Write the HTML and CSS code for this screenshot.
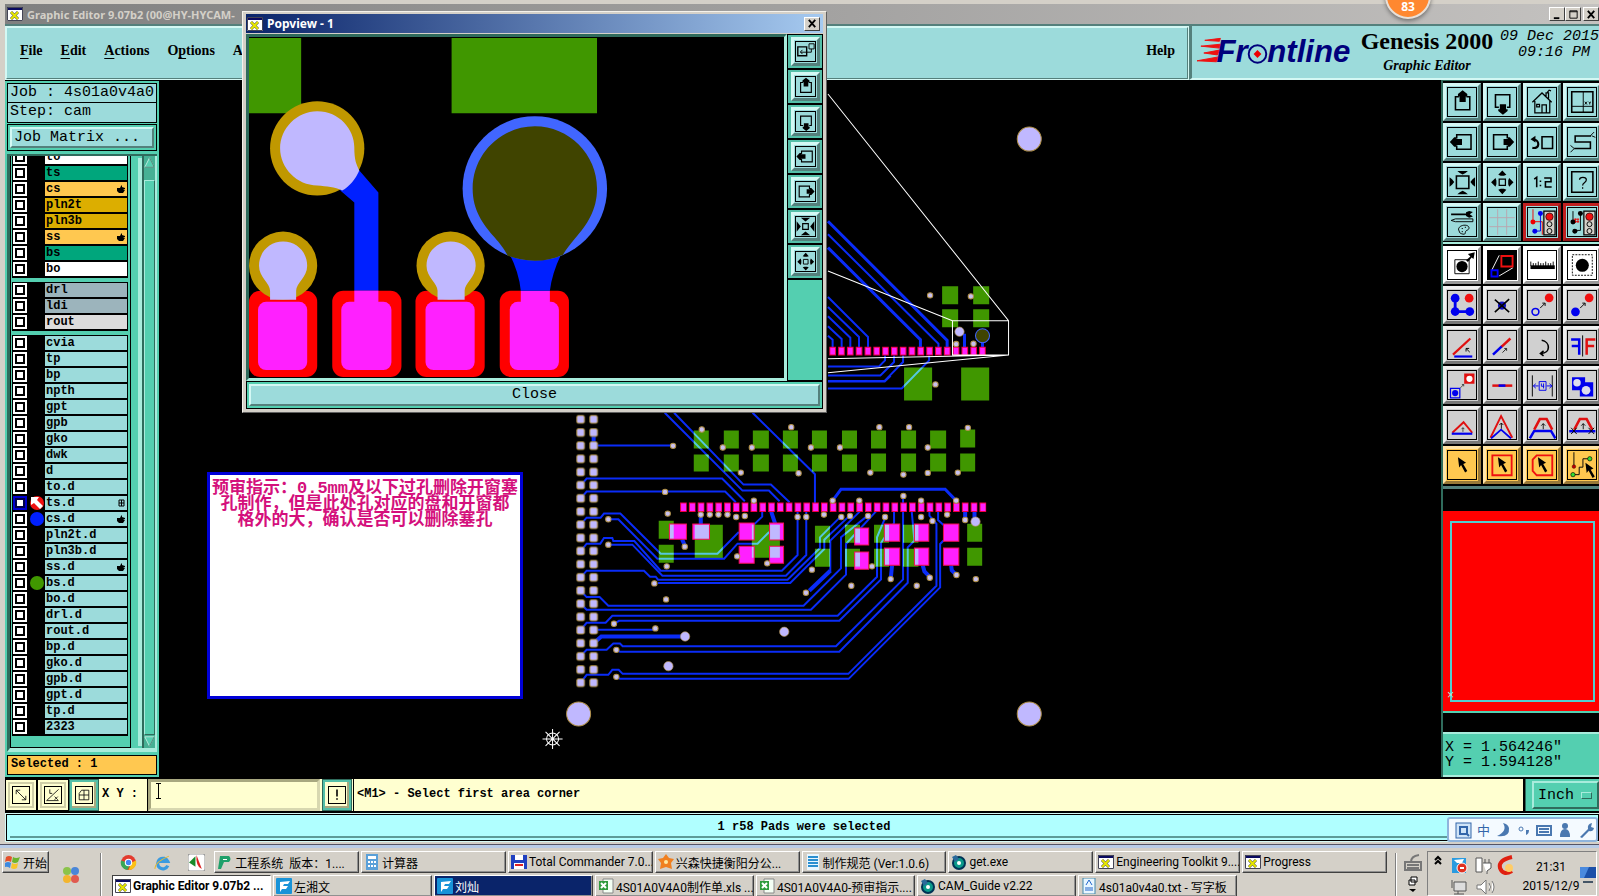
FILE: index.html
```html
<!DOCTYPE html>
<html lang="zh">
<head>
<meta charset="utf-8">
<title>Graphic Editor 9.07b2</title>
<link rel="stylesheet" href="styles.css">
</head>
<body>
<svg class="defs" aria-hidden="true">
  <symbol id="xwin" viewBox="0 0 16 14"><rect width="16" height="14" fill="#fff"/><path d="M0 0h16v3H0z" fill="#0a0a60"/><path d="M.5.5h15v13H.5z" fill="none" stroke="#445"/><path d="M4 5l7 7M11 5l-7 7" stroke="#555" stroke-width="3"/><path d="M4 5l7 7M11 5l-7 7" stroke="#e6e600" stroke-width="2"/></symbol>
  <symbol id="up" viewBox="0 0 90 90"><path d="M35 28H24v42h46V28H59" fill="none" stroke="#000" stroke-width="5"/><path d="M47 7l15 12v8h-5v18H37V27h-5v-8z"/></symbol>
  <symbol id="down" viewBox="0 0 90 90"><path d="M35 62H24V22h46v40H61" fill="none" stroke="#000" stroke-width="5"/><path d="M48 86l15-12v-6h-5V52H38v16h-5v6z"/></symbol>
  <symbol id="left" viewBox="0 0 90 90"><path d="M28 34V22h46v46H28V56" fill="none" stroke="#000" stroke-width="5"/><path d="M6 45l14-15h7v5h18v20H27v5h-7z"/></symbol>
  <symbol id="right" viewBox="0 0 90 90"><path d="M62 34V22H18v46h44V56" fill="none" stroke="#000" stroke-width="5"/><path d="M84 45L70 30h-6v5H50v20h14v5h6z"/></symbol>
  <symbol id="zin" viewBox="0 0 90 90"><path d="M27 26h40v40H27z" fill="none" stroke="#000" stroke-width="5"/><path d="M30 10h34l-8 6-9 5-9-5zM30 84h34l-8-6-9-5-9 5zM5 30v30l8-6 7-9-7-9zM87 30v30l-8-6-7-9 7-9z"/></symbol>
  <symbol id="zins" viewBox="0 0 90 90"><path d="M33 33h24v24H33z" fill="none" stroke="#000" stroke-width="5"/><path d="M25 7h40L45 24zM25 83h40L45 66zM7 22v46l18-23zM83 22v46L65 45z"/></symbol>
  <symbol id="zout" viewBox="0 0 90 90"><path d="M36 36h20v20H36z" fill="none" stroke="#000" stroke-width="4"/><path d="M33 22l13-14 13 14-8 3H41zM33 70l13 14 13-14-8-3H41zM24 32L10 46l14 14 3-8V40zM68 32l14 14-14 14-3-8V40z"/></symbol>
  <symbol id="hand" viewBox="0 0 8 8"><path d="M0 3h3l1-2 1-1v2l3 1v1H6l2 1-2 3H2L0 6z"/></symbol>
  <symbol id="cur" viewBox="0 0 90 90"><path d="M32 20l26 18-9 4 13 22-7 5-13-24-6 8z"/></symbol>
  <symbol id="sarrow" viewBox="0 0 24 24"><path d="M3 21L18 6M10 5h9v9" fill="none" stroke="#000" stroke-width="3"/></symbol>
  <symbol id="uarrow" viewBox="0 0 24 24"><path d="M12 24V4M5 11l7-7 7 7" fill="none" stroke="#000" stroke-width="3"/></symbol>
  <symbol id="excel" viewBox="0 0 16 16"><path d="M5 1h10v14H5z" fill="#f4fff4" stroke="#888"/><path d="M1 3h9v9H1z" fill="#2e9a3c"/><path d="M3 5l5 5M8 5l-5 5" stroke="#fff" stroke-width="2"/></symbol>
  <symbol id="fei" viewBox="0 0 16 16"><rect width="16" height="16" rx="1" fill="#1893d8"/><path d="M4 4l10-1-2 3H8l-1 2h5l-2 3H6l-2 3 0-6z" fill="#fff"/></symbol>
  <symbol id="gear" viewBox="0 0 16 16"><circle cx="8" cy="9" r="6" fill="#0a9a8a" stroke="#035" stroke-width="2"/><circle cx="8" cy="9" r="2" fill="#fff"/><path d="M1 3l4-2 3 4-4 3z" fill="#2a6a9a"/></symbol>
</svg>

<div class="app">
  <header class="titlebar"><svg class="ico"><use href="#xwin"/></svg><span class="title">Graphic Editor 9.07b2 (00@HY-HYCAM-</span>
    <span class="winbtns"><button aria-label="Minimize"><svg viewBox="0 0 12 12"><path d="M2 9h6v2H2z"/></svg></button><button aria-label="Maximize"><svg viewBox="0 0 12 12"><path d="M2 2h8v8H2zM2 3h8" fill="none" stroke="#000"/></svg></button><button class="x" aria-label="Close window"><svg viewBox="0 0 12 12"><path d="M2 2l7 8M9 2l-7 8" stroke="#000" stroke-width="2"/></svg></button></span>
  </header>

  <div class="top">
    <nav class="menubar"><button><u>F</u>ile</button><button><u>E</u>dit</button><button><u>A</u>ctions</button><button>O<u>p</u>tions</button><button>Analysis</button><button class="help">Help</button></nav>
    <div class="brand">
      <svg class="logo" viewBox="0 0 164 40" role="img" aria-label="Frontline"><path d="M8 7l16-2-1 3zM4 13l20-2-1 4zM7 20l16-3-2 5zM0 28l22-4-2 5z" fill="#e11" stroke="#e11"/><text x="20" y="29">Fr</text><text x="72" y="29">ntline</text><circle cx="62" cy="21" r="9" fill="none" stroke="#00007c" stroke-width="2"/><path d="M62 17l4 4-4 4-4-4z" fill="#e00"/></svg>
      <div class="names"><div class="gen">Genesis 2000</div><div class="ge">Graphic Editor</div></div>
      <div class="date">09 Dec 2015<br>09:16 PM&nbsp;</div>
    </div>
  </div>

  <main class="main">
    <aside class="side">
      <div class="jobbox">Job : 4s01a0v4a0</div>
      <div class="jobbox step">Step: cam</div>
      <div class="matrix"><button>Job Matrix ...</button></div>
      <div class="listwrap">
        <div class="list">
          <div class="grp first">
            <label class="w"><input type="checkbox"><i></i><span>to</span></label>
            <label class="g"><input type="checkbox"><i></i><span>ts</span></label>
            <label class="o"><input type="checkbox"><i></i><span>cs<svg><use href="#hand"/></svg></span></label>
            <label class="y"><input type="checkbox"><i></i><span>pln2t</span></label>
            <label class="y"><input type="checkbox"><i></i><span>pln3b</span></label>
            <label class="o"><input type="checkbox"><i></i><span>ss<svg><use href="#hand"/></svg></span></label>
            <label class="g"><input type="checkbox"><i></i><span>bs</span></label>
            <label class="w"><input type="checkbox"><i></i><span>bo</span></label>
          </div>
          <div class="grp">
            <label class="s"><input type="checkbox"><i></i><span>drl</span></label>
            <label class="s"><input type="checkbox"><i></i><span>ldi</span></label>
            <label class="r"><input type="checkbox"><i></i><span>rout</span></label>
          </div>
          <div class="grp">
            <label><input type="checkbox"><i></i><span>cvia</span></label>
            <label><input type="checkbox"><i></i><span>tp</span></label>
            <label><input type="checkbox"><i></i><span>bp</span></label>
            <label><input type="checkbox"><i></i><span>npth</span></label>
            <label><input type="checkbox"><i></i><span>gpt</span></label>
            <label><input type="checkbox"><i></i><span>gpb</span></label>
            <label><input type="checkbox"><i></i><span>gko</span></label>
            <label><input type="checkbox"><i></i><span>dwk</span></label>
            <label><input type="checkbox"><i></i><span>d</span></label>
            <label><input type="checkbox"><i></i><span>to.d</span></label>
            <label><input type="checkbox" checked><i class="dot red"><svg viewBox="0 0 14 14"><path d="M1 1h8L7 4l6 6-3 3-6-6-3 2z" fill="#fff"/></svg></i><span>ts.d<svg viewBox="0 0 8 8"><path d="M2 1h5v6H2zM2 4h5M4.500 1v6" fill="none" stroke="#000"/></svg></span></label>
            <label><input type="checkbox"><i class="dot blue"></i><span>cs.d<svg><use href="#hand"/></svg></span></label>
            <label><input type="checkbox"><i></i><span>pln2t.d</span></label>
            <label><input type="checkbox"><i></i><span>pln3b.d</span></label>
            <label><input type="checkbox"><i></i><span>ss.d<svg><use href="#hand"/></svg></span></label>
            <label><input type="checkbox"><i class="dot green"></i><span>bs.d</span></label>
            <label><input type="checkbox"><i></i><span>bo.d</span></label>
            <label><input type="checkbox"><i></i><span>drl.d</span></label>
            <label><input type="checkbox"><i></i><span>rout.d</span></label>
            <label><input type="checkbox"><i></i><span>bp.d</span></label>
            <label><input type="checkbox"><i></i><span>gko.d</span></label>
            <label><input type="checkbox"><i></i><span>gpb.d</span></label>
            <label><input type="checkbox"><i></i><span>gpt.d</span></label>
            <label><input type="checkbox"><i></i><span>tp.d</span></label>
            <label><input type="checkbox"><i></i><span>2323</span></label>
          </div>
        </div>
        <div class="scroll"><svg viewBox="0 0 14 14"><path d="M1 13L7 1l6 12z" fill="#54cfb0" stroke="#d4f5ea"/><path d="M7 1l6 12H1" fill="none" stroke="#2f6b5c"/></svg><div class="thumb"></div><svg viewBox="0 0 14 14"><path d="M1 1h12L7 13z" fill="#54cfb0" stroke="#d4f5ea"/><path d="M13 1L7 13" stroke="#2f6b5c"/></svg></div>
      </div>
      <div class="selected">Selected : 1</div>
    </aside>

    <section class="canvas">
      <svg class="pcb" viewBox="159 80 1281 696" preserveAspectRatio="xMinYMin slice">
        <defs>
          <pattern id="conn" x="40.500" y="97.300" width="39" height="39.450" patternUnits="userSpaceOnUse"><rect x="8" y="8" width="23" height="23" rx="5" fill="#c0b8ff" stroke="#a88a38" stroke-width="3"/></pattern>
          <marker id="via" markerUnits="userSpaceOnUse" markerWidth="24" markerHeight="24" viewBox="-12 -12 24 24"><circle r="8" fill="#c8c0f0" stroke="#b09048" stroke-width="3"/></marker>
          <marker id="big" markerUnits="userSpaceOnUse" markerWidth="36" markerHeight="36" viewBox="-18 -18 36 36"><circle r="14" fill="#c0b8ff" stroke="#b09048" stroke-width="2"/></marker>
          <path id="greens" d="M399 150h45v54h-45zM489 150h45v54h-45zM576 150h48v54h-48zM666 150h45v54h-45zM753 150h45v54h-45zM843 150h45v54h-45zM930 150h45v54h-45zM1020 150h45v54h-45zM1107 150h48v54h-48zM1197 147h45v54h-45zM399 222h45v51h-45zM489 222h45v51h-45zM576 222h48v51h-48zM666 222h45v51h-45zM753 222h45v51h-45zM843 222h45v51h-45zM930 219h45v54h-45zM1020 219h45v54h-45zM1107 219h48v54h-48zM1197 219h45v54h-45zM294 420h45v54h-45zM294 492h45v54h-45zM402 432h84v99h-84zM573 432h84v99h-84zM762 435h45v51h-45zM762 504h45v54h-45zM852 432h45v54h-45zM852 504h45v54h-45zM939 432h45v54h-45zM939 504h45v54h-45zM1026 432h46v54h-46zM1026 504h46v54h-46zM1218 429h45v54h-45zM1218 501h45v54h-45zM1143-282h48v54h-48zM1236-282h48v54h-48zM1143-213h48v54h-48zM1236-213h48v54h-48zM1029-39h84v99h-84zM1200-39h84v99h-84z"/>
          <clipPath id="gc"><use href="#greens"/></clipPath>
          <path id="pads" d="M326 430h51v46h-51zM396 430h50v46h-50zM535 427h45v51h-45zM626 427h42v51h-42zM535 497h45v51h-45zM626 497h42v51h-42zM881 442h42v51h-42zM881 514h42v52h-42zM970 430h46v52h-46zM970 502h46v52h-46zM1060 430h43v52h-43zM1060 502h43v52h-43zM1147 430h46v52h-46zM1147 502h46v52h-46z"/>
          <g id="traces" fill="none" stroke="currentColor" stroke-width="6">
            <path d="M60 432l18-21h42l10-12h49l121 120h170l64-65M143 416h30l117 118h200l40-45h60l35-35M60 512l18-23h41l11-17h25l3 9h63l79 89h363l47-47V393M143 492h72l90 93h370l61-62V393M60 591l18-21h172l18 18h17l7 9h388l97-95v-32l65-65M292 607h396l102-102v-28l76-72M60 630l18 19h39l26 26h585l112-112v-93l80-65M60 669l18 18h672l105-105v-92l92-100M808 575V480l88-87M60 747l18-21h57l20-21h675l118-117V470l25-60M160 729l15-9h660l125-124V487l39-60v-34M60 826l18-19h60l20-19h20l8 8h639l201-200V345M167 807l11 6h657l205-207V500l20-20-8-87M60 906l18-24h65l12-15h19l12 12h676l264-264V430l-21-25v-12M167 888l11 6h685l274-274V490l12-12M1131 393v25l16 15M99 747h185M99 195h238M60 315l18-21h406l68 68M60 354l18-21h415l32 32M312 97l233 233h79l32 32M340 97l208 215h82l56 53M575 97l187 184v89M604 393v15l-25 24M801 3h170l18-17"/>
            <path d="M801-250l120 120v30M801-220l93 90v30M801-192l67 64v28M801-162l41 38v24M801-134l14 12v22M801-42h153l18-18v-15M801-15h157l41-40v-20M801 2h169l56-57v-20M801 24h221l82-84v-15M801-438l331 328v15"/>
            <path d="M815 360l25-34h312l33 34M801-477l357 357v20M801-398l277 276v22M1210-140v40M1264-125v30" stroke-width="9"/>
            <path d="M99 155v40M99 787l23-20h251M420 393v45M745 630l63-60M364 476l9 20M631 393l12 37M993 554l-4 40M1085 554l5 18 14 14M1170 554l2 15 12 12M1240 390v30M1212 390v25" stroke-width="12"/>
          </g>
        </defs>
        <rect x="159" y="80" width="1281" height="696"/>
        <g transform="translate(560 380) scale(.33333)">
          <use href="#traces" color="#0a2cf8"/>
          <use href="#greens" fill="#409700"/>
          <g clip-path="url(#gc)"><use href="#traces" color="#55c8de"/></g>
          <use href="#pads" fill="#ff20ff"/>
          <g clip-path="url(#gc)"><use href="#pads" fill="#c0b8ff"/></g>
          <use href="#pads" fill="none" stroke="#f01050" stroke-width="3"/>
          <path d="M358 380h918" stroke="#f00040" stroke-width="28" stroke-dasharray="20 6.380"/>
          <path d="M361 380h918" stroke="#ff20ff" stroke-width="23" stroke-dasharray="15 11.380"/>
          <path d="M805-88h470" stroke="#f00040" stroke-width="26" stroke-dasharray="20 6.400"/>
          <path d="M808-88h470" stroke="#ff20ff" stroke-width="20" stroke-dasharray="14 12.400"/>
          <rect x="40.500" y="97.300" width="78" height="828.400" fill="url(#conn)"/>
          <polyline fill="none" marker-start="url(#via)" marker-mid="url(#via)" marker-end="url(#via)" points="423,147 691,140 955,140 1044,140 1220,142 486,201 573,201 750,201 837,201 1100,201 540,276 713,278 928,276 1027,282 1100,277 1190,276 337,196 313,334 321,399 143,416 143,492 579,360 815,360 895,360 1027,346 1080,360 1185,360 420,402 447,402 473,402 500,402 526,409 552,406 710,409 736,409 789,402 841,409 867,406 921,406 972,409 1080,409 1114,421 1158,402 1212,418 372,498 529,527 619,548 318,557 753,567 281,608 735,636 871,615 933,557 989,595 1067,615 1106,591 1186,583 1244,595 316,656 160,729 284,743 167,807 167,888 1107,-255 1229,-252 1185,-109 1237,-110 1123,12"/>
          <polyline fill="none" marker-start="url(#big)" marker-mid="url(#big)" marker-end="url(#big)" points="373,767 670,753 323,856 1195,-146 1243,423"/>
          <circle cx="1264" cy="-134" r="21" fill="#404400" stroke="#4166ff" stroke-width="3"/>
          <path d="M801-858l541 679v103h-168v-103h168M801-328l373 149M801-65l541-11-541 53" fill="none" stroke="#fff" stroke-width="3"/>
        </g>
        <g fill="#c0b8ff" stroke="#b09048"><circle cx="1028" cy="139" r="12"/><circle cx="578" cy="713" r="12"/><circle cx="1028" cy="713" r="12"/></g>
        <g stroke="#fff" fill="none"><circle cx="552" cy="738" r="6"/><path d="M542 738h20M552 728v20M545 731l14 14M559 731l-14 14"/></g>
      </svg>
      <div class="note">预审指示：0.5mm及以下过孔删除开窗塞<br>孔制作，但是此处孔对应的盘和开窗都<br>格外的大，确认是否可以删除塞孔</div>
    </section>

    <aside class="tools">
      <div class="grid">
        <button aria-label="Pan up"><svg><use href="#up"/></svg></button>
        <button aria-label="Pan down"><svg><use href="#down"/></svg></button>
        <button aria-label="Home"><svg viewBox="0 0 90 90"><path d="M14 46l31-30 31 30M22 42v38h48V42M45 80V54h14v26M28 53h9v8h-9zM58 28V16h8v18M62 14l6-7 6 2" fill="none" stroke="#000" stroke-width="4"/></svg></button>
        <button aria-label="Window XY"><svg viewBox="0 0 90 90"><path d="M12 12h68v66H12z" fill="none" stroke="#000" stroke-width="5"/><path d="M49 12v66M12 59h68M54 44l7 9M61 44l-7 9M66 44l4 4 4-4M70 48v5" fill="none" stroke="#000" stroke-width="3"/></svg></button>
        <button aria-label="Pan left"><svg><use href="#left"/></svg></button>
        <button aria-label="Pan right"><svg><use href="#right"/></svg></button>
        <button aria-label="Previous view"><svg viewBox="0 0 90 90"><path d="M45 28h34v38H45z" fill="none" stroke="#000" stroke-width="5"/><path d="M14 64c26 4 22-24 8-26" fill="none" stroke="#000" stroke-width="7"/><path d="M8 36l16-11v22z"/></svg></button>
        <button aria-label="Serpentine"><svg viewBox="0 0 90 90"><path d="M74 26H23v19h49v21H20" fill="none" stroke="#000" stroke-width="5"/><path d="M72 25l12-12M76 25l12 5M20 66L8 56M20 66L8 78" fill="none" stroke="#000" stroke-width="3"/></svg></button>
        <button aria-label="Zoom in"><svg><use href="#zin"/></svg></button>
        <button aria-label="Zoom out"><svg><use href="#zout"/></svg></button>
        <button aria-label="Scale 1:2"><svg viewBox="0 0 90 90"><path d="M20 36l8-6v32M40 40v5M40 54v5M52 32h22v12H56v17h20" fill="none" stroke="#000" stroke-width="5"/></svg></button>
        <button aria-label="Help"><svg viewBox="0 0 90 90"><path d="M12 12h68v66H12z" fill="none" stroke="#000" stroke-width="5"/><path d="M37 38c0-10 22-10 22 0s-12 9-12 18M47 62v5" fill="none" stroke="#000" stroke-width="4"/></svg></button>
        <button aria-label="Setup"><svg viewBox="0 0 90 90"><path d="M10 18h50v5H10zM58 14l10-4 12 3-10 7 10 7-12 4-10-5z"/><path d="M10 40l14-5h56v9H24zM36 74c-8-10 8-22 24-18 12 4 8 14 0 16-8 4 0 14-12 12-8-2-12-4-12-10zM44 66h4M54 62h4M44 76h4" fill="none" stroke="#000" stroke-width="3"/></svg></button>
        <button aria-label="Grid"><svg viewBox="0 0 90 90"><path d="M31 4v82M60 4v82M4 31h82M4 60h82" stroke="#b9a6ae" stroke-width="3"/></svg></button>
        <button class="rb" aria-label="Net compare"><svg viewBox="0 0 90 90"><path d="M16 4v40h30v42" fill="none" stroke="#e00" stroke-width="3"/><path d="M40 18v56H20" fill="none" stroke="#00e" stroke-width="3"/><circle cx="16" cy="45" r="8" fill="#e00"/><circle cx="40" cy="18" r="8" fill="#00e"/><circle cx="22" cy="75" r="8" fill="#00e"/><path d="M51 10h36v76H51z" fill="#d4d0c8" stroke="#000" stroke-width="4"/><circle cx="69" cy="28" r="12" fill="#f01010" stroke="#000" stroke-width="2"/><g fill="none" stroke="#000" stroke-width="3"><circle cx="69" cy="52" r="8"/><circle cx="69" cy="74" r="8"/></g></svg></button>
        <button class="rb" aria-label="Net check"><svg viewBox="0 0 90 90"><path d="M16 10v36M40 18v54H22" fill="none" stroke="#000" stroke-width="3"/><path d="M18 36h18M18 44h18M24 34v14M32 34v14" stroke="#e00" stroke-width="3"/><circle cx="16" cy="45" r="8"/><circle cx="40" cy="18" r="8"/><circle cx="22" cy="75" r="8"/><path d="M51 10h36v76H51z" fill="#d4d0c8" stroke="#000" stroke-width="4"/><circle cx="69" cy="28" r="12" fill="#f01010" stroke="#000" stroke-width="2"/><g fill="none" stroke="#000" stroke-width="3"><circle cx="69" cy="52" r="8"/><circle cx="69" cy="74" r="8"/></g></svg></button>
      </div>
      <div class="grid gray">
        <button class="wh" aria-label="Move pad"><svg viewBox="0 0 90 90"><path d="M22 28h46v45H22z" fill="none" stroke="#000" stroke-width="3"/><circle cx="45" cy="50" r="18"/><path d="M58 30l14-12-8-8 22-6-4 22-6-5-12 14z"/></svg></button>
        <button class="wh" aria-label="Popview"><svg viewBox="0 0 90 90"><path d="M0 0h90v90H0z"/><path d="M36 14L12 62M80 54L36 80" stroke="#fff" stroke-width="3"/><path d="M43 16h36v34H43z" fill="none" stroke="#f01010" stroke-width="6"/><path d="M11 62h20v20H11z" fill="none" stroke="#00f" stroke-width="6"/></svg></button>
        <button class="wh" aria-label="Measure"><svg viewBox="0 0 90 90"><path d="M8 46h78v12H8z"/><path d="M9 48V34m8 14v-9m8 9v-9m8 9V34m8 14v-9m8 9v-9m8 9V34m8 14v-9m8 9v-9m8 9V34" stroke="#000" stroke-width="3"/></svg></button>
        <button class="wh" aria-label="Select area"><svg viewBox="0 0 90 90"><path d="M14 12h64v66H14z" fill="none" stroke="#000" stroke-width="3" stroke-dasharray="6 4"/><circle cx="46" cy="46" r="21"/></svg></button>
        <button aria-label="Copy nets"><svg viewBox="0 0 90 90"><path d="M23 23v43h50" fill="none" stroke="#00e" stroke-width="9"/><g fill="#00e"><circle cx="23" cy="23" r="14"/><circle cx="23" cy="66" r="14"/><circle cx="70" cy="66" r="14"/></g><circle cx="68" cy="23" r="14" fill="#f01010"/></svg></button>
        <button aria-label="Delete"><svg viewBox="0 0 90 90"><circle cx="45" cy="47" r="13" fill="#1010c0"/><path d="M22 28l46 40M68 26L22 68" stroke="#000" stroke-width="5"/></svg></button>
        <button aria-label="Move"><svg viewBox="0 0 90 90"><circle cx="68" cy="22" r="14" fill="#f01010"/><circle cx="24" cy="67" r="11" fill="none" stroke="#00e" stroke-width="5"/><use href="#sarrow" x="36" y="34" width="24" height="24"/></svg></button>
        <button aria-label="Copy"><svg viewBox="0 0 90 90"><circle cx="68" cy="22" r="14" fill="#f01010"/><circle cx="24" cy="67" r="14" fill="#00e"/><use href="#sarrow" x="36" y="34" width="24" height="24"/></svg></button>
        <button aria-label="Rotate line"><svg viewBox="0 0 90 90"><path d="M16 76l56-52" stroke="#e01010" stroke-width="7"/><path d="M20 82h58" stroke="#00e" stroke-width="7"/><path d="M70 68L58 56M58 66V56h10" fill="none" stroke="#000" stroke-width="3"/></svg></button>
        <button aria-label="Extend line"><svg viewBox="0 0 90 90"><path d="M16 76l30-28" stroke="#00e" stroke-width="8"/><path d="M44 50l28-26" stroke="#e01010" stroke-width="8"/><use href="#sarrow" x="44" y="52" width="20" height="20"/></svg></button>
        <button aria-label="Rotate"><svg viewBox="0 0 90 90"><path d="M44 30c28 4 30 42-2 42M50 64l-10 8 10 8" fill="none" stroke="#000" stroke-width="5"/></svg></button>
        <button aria-label="Mirror"><svg viewBox="0 0 90 90"><path d="M47 14v68" stroke="#000" stroke-width="3"/><path d="M10 27h26v49M12 48h24" fill="none" stroke="#00e" stroke-width="8"/><path d="M88 27H60v49M60 48h24" fill="none" stroke="#e01010" stroke-width="8"/></svg></button>
        <button aria-label="Resize"><svg viewBox="0 0 90 90"><path d="M8 56h30v30H8z" fill="none" stroke="#00e" stroke-width="4"/><circle cx="23" cy="71" r="10" fill="#00e"/><path d="M52 8h33v33H52z" fill="#e01010"/><circle cx="69" cy="25" r="10" fill="#fff"/><use href="#sarrow" x="38" y="40" width="16" height="16"/></svg></button>
        <button aria-label="Stretch"><svg viewBox="0 0 90 90"><path d="M14 47h64" stroke="#e01010" stroke-width="8"/><path d="M34 47h22" stroke="#00e" stroke-width="8"/></svg></button>
        <button aria-label="Spacing"><svg viewBox="0 0 90 90"><path d="M14 14v68M78 14v68" stroke="#000" stroke-width="3"/><path d="M36 34h22v28H36zM18 48h16M60 48h16M25 41l-8 7 8 7M69 41l8 7-8 7M43 40v9h9M50 40v16" fill="none" stroke="#00e" stroke-width="3"/></svg></button>
        <button aria-label="Merge"><svg viewBox="0 0 90 90"><path d="M13 20h42v16h26v46H38V62H13z" fill="#00e"/><circle cx="29" cy="38" r="12" fill="#dde"/><circle cx="58" cy="62" r="14" fill="#dde"/></svg></button>
        <button aria-label="Triangle"><svg viewBox="0 0 90 90"><path d="M14 70l36-34 28 34" fill="none" stroke="#e01010" stroke-width="6"/><path d="M12 73h66" stroke="#00e" stroke-width="7"/><use href="#uarrow" x="40" y="50" width="16" height="18"/></svg></button>
        <button aria-label="Peak"><svg viewBox="0 0 90 90"><path d="M8 86l34-70 36 70" fill="none" stroke="#e01010" stroke-width="6"/><path d="M10 88l32-28 32 28" fill="none" stroke="#00e" stroke-width="6"/><use href="#uarrow" x="32" y="34" width="22" height="24"/></svg></button>
        <button aria-label="Trapezoid"><svg viewBox="0 0 90 90"><path d="M6 88l14-24h54l14 24" fill="none" stroke="#00e" stroke-width="8"/><path d="M20 60l18-34h22l18 34" fill="none" stroke="#e01010" stroke-width="8"/><use href="#uarrow" x="38" y="36" width="22" height="24"/></svg></button>
        <button aria-label="Trapezoid cut"><svg viewBox="0 0 90 90"><path d="M4 65h84" stroke="#00e" stroke-width="8"/><path d="M20 60l18-34h22l18 34" fill="none" stroke="#e01010" stroke-width="8"/><path d="M10 54l18 20M28 54L10 74M66 54l18 20M84 54L66 74" stroke="#000" stroke-width="3"/><use href="#uarrow" x="38" y="36" width="22" height="24"/></svg></button>
        <button class="am" aria-label="Select"><svg><use href="#cur"/></svg></button>
        <button class="am" aria-label="Select in rectangle"><svg viewBox="0 0 90 90"><path d="M14 14h62v64H14z" fill="none" stroke="#f01010" stroke-width="6"/><use href="#cur" width="90" height="90"/></svg></button>
        <button class="am" aria-label="Select in polygon"><svg viewBox="0 0 90 90"><path d="M28 14h50v64H28L15 64V28z" fill="none" stroke="#f01010" stroke-width="6"/><use href="#cur" width="90" height="90"/></svg></button>
        <button class="am" aria-label="Select net"><svg viewBox="0 0 90 90"><path d="M19 4v46M16 76h20V52h12V25h20" fill="none" stroke="#000" stroke-width="3"/><circle cx="19" cy="50" r="6" fill="#b00" stroke="#000"/><g fill="#3d3" stroke="#000" stroke-width="2"><circle cx="16" cy="76" r="7"/><circle cx="70" cy="25" r="7"/></g><use href="#cur" x="24" y="18" width="90" height="90"/></svg></button>
      </div>
      <div class="gap"></div>
      <div class="overview"><div class="frame"><span>×</span></div></div>
      <div class="gap2"></div>
      <div class="coords">X = 1.564246"<br>Y = 1.594128"</div>
    </aside>
  </main>

  <div class="cmd">
    <button class="cb" aria-label="Snap"><svg viewBox="0 0 20 20"><path d="M4 4l12 12M4 9V4h5M16 11v5h-5" fill="none" stroke="#000"/></svg></button>
    <button class="cb" aria-label="Angle"><svg viewBox="0 0 20 20"><path d="M2 17L17 3M2 17h15M6 3v5h3M12 12l4 4M16 12l-4 4" fill="none" stroke="#000"/></svg></button>
    <button class="cb on" aria-label="Grid snap"><svg viewBox="0 0 20 20"><path d="M7 4h9v12H4V8zM4 10h12M10 4v12" fill="none" stroke="#000"/></svg></button>
    <label for="xy">X Y :</label>
    <span class="field"><input id="xy" type="text"><svg viewBox="0 0 7 16"><path d="M1 .5h5M1 15.500h5M3.500 1v14" stroke="#000"/></svg></span>
    <button class="cb on" aria-label="Run"><svg viewBox="0 0 20 20"><path d="M9 3h2v9H9zM9 14h2v2H9z"/></svg></button>
    <output class="msg">&lt;M1&gt; - Select first area corner</output>
    <div class="unit"><button>Inch<i></i></button></div>
  </div>
  <div class="status"><div>1 r58 Pads were selected</div></div>
</div>

<footer class="taskbar">
  <button class="tb start"><svg viewBox="0 0 16 16"><path d="M1 3q3-2 6 0L6 8Q3 6 0 8z" fill="#e5502a"/><path d="M8 3q3 2 7 0l-2 5q-3 2-6 0z" fill="#6ab52c"/><path d="M0 9q3-2 6 0l-1 5q-3-2-5-1z" fill="#3d8ae0"/><path d="M7 9q3 2 6 0l-1 5q-3 2-6 0z" fill="#f7c52c"/></svg>开始</button>
  <svg class="clover" viewBox="0 0 18 18"><circle cx="5" cy="5" r="4" fill="#8bc34a"/><circle cx="13" cy="5" r="4" fill="#4a86d8"/><circle cx="5" cy="13" r="4" fill="#f3b52e"/><circle cx="13" cy="13" r="4" fill="#e05a50"/></svg>
  <i class="sep"></i>
  <div class="rows">
    <div class="row">
      <span class="quick">
        <svg viewBox="0 0 16 16"><circle cx="8" cy="8" r="7" fill="#e33b2e"/><path d="M1 6a7 7 0 0 0 6 9l3-6z" fill="#3aa757"/><path d="M15 6a7 7 0 0 1-7 9l3-7z" fill="#fbc116"/><circle cx="8" cy="8" r="3" fill="#4285f4" stroke="#fff"/></svg>
        <svg viewBox="0 0 16 16"><path d="M13 11a5 5 0 1 1 0-4H5" fill="none" stroke="#3a9be0" stroke-width="3"/><path d="M1 14Q0 8 14 2" fill="none" stroke="#e8b830" stroke-width="1"/></svg>
        <svg viewBox="0 0 16 16"><rect width="16" height="16" rx="2" fill="#fff" stroke="#999"/><path d="M8 1l5 13q-6-2-5-13z" fill="#d22"/><path d="M7 2v10L1 8z" fill="#1a8a2a"/></svg>
      </span>
      <button class="tb"><svg viewBox="0 0 16 16"><path d="M3 2h9q3 3 0 6H7L4 15H1z" fill="#1fa06a"/><path d="M6 5h4v1H6z" fill="#fff"/></svg><span>工程系统&ensp;版本：1....</span></button>
      <button class="tb"><svg viewBox="0 0 16 16"><path d="M2 0h12v16H2z" fill="#5aa0d8"/><path d="M4 2h8v3H4zM4 7h2v2H4zM7 7h2v2H7zM10 7h2v2h-2zM4 11h2v2H4zM7 11h2v2H7zM10 11h2v2h-2z" fill="#fff"/></svg><span>计算器</span></button>
      <button class="tb"><svg viewBox="0 0 16 16"><path d="M0 1h16v14H0z" fill="#2040c0"/><path d="M4 1h8v5H4zM3 9h10v6H3z" fill="#fff"/><path d="M4 11h8" stroke="#d22" stroke-width="2"/></svg><span>Total Commander 7.0...</span></button>
      <button class="tb"><svg viewBox="0 0 16 16"><path d="M8 0l3 4 5 1-3 4 1 6-6-2-6 2 1-6-3-4 5-1z" fill="#f08020"/><circle cx="8" cy="8" r="2" fill="#ffe9a0"/></svg><span>兴森快捷衡阳分公...</span></button>
      <button class="tb"><svg viewBox="0 0 16 16"><path d="M2 0h12v16H2z" fill="#e8f6ff"/><path d="M3 3h10M3 6h10M3 9h10M3 12h10" stroke="#2a8fd0" stroke-width="2"/></svg><span>制作规范 (Ver:1.0.6)</span></button>
      <button class="tb"><svg><use href="#gear"/></svg><span>get.exe</span></button>
      <button class="tb"><svg><use href="#xwin"/></svg><span>Engineering Toolkit 9....</span></button>
      <button class="tb"><svg><use href="#xwin"/></svg><span>Progress</span></button>
    </div>
    <div class="row two">
      <button class="tb active"><svg><use href="#xwin"/></svg><span>Graphic Editor 9.07b2 ...</span></button>
      <button class="tb"><svg><use href="#fei"/></svg><span>左湘文</span></button>
      <button class="tb flash"><svg><use href="#fei"/></svg><span>刘灿</span></button>
      <button class="tb"><svg><use href="#excel"/></svg><span>4S01A0V4A0制作单.xls ...</span></button>
      <button class="tb"><svg><use href="#excel"/></svg><span>4S01A0V4A0-预审指示....</span></button>
      <button class="tb"><svg><use href="#gear"/></svg><span>CAM_Guide v2.22</span></button>
      <button class="tb"><svg viewBox="0 0 16 16"><path d="M2 0h12v16H2z" fill="#e8f6ff" stroke="#48a"/><path d="M5 7l3-5 3 5M4 10h8M4 12h8" fill="none" stroke="#26c"/></svg><span>4s01a0v4a0.txt - 写字板</span></button>
    </div>
  </div>
  <i class="sep late"></i>
  <svg class="lang" viewBox="0 0 20 40"><path d="M2 10h16v8H2zM4 13h12M4 16h12M8 10q0-6 8-7" fill="none" stroke="#777" stroke-width="2"/><path d="M8 25h6v5H8zM6 28h6v5H6z" fill="#fff" stroke="#000"/><path d="M6 37h7l-3 3z"/></svg>
  <div class="tray">
    <svg class="icons" viewBox="0 0 94 46"><path d="M7 8l3-3 3 3M7 12l3-3 3 3" fill="none" stroke="#000" stroke-width="2"/><rect x="24" y="6" width="14" height="15" fill="#2a9be0"/><path d="M26 8l10-1-2 4h-5z" fill="#fff"/><circle cx="34" cy="16" r="5" fill="#e03020" stroke="#fff"/><path d="M32 16h4" stroke="#fff" stroke-width="2"/><path d="M48 6h6v14h-6zM55 11h8v5l-4 3v3M57 7v4M61 7v4" fill="#fff" stroke="#555"/><path d="M84 5q-14 3-12 11 3 8 12 3" fill="none" stroke="#e02010" stroke-width="4"/><circle cx="81" cy="16" r="4" fill="#fc6"/><path d="M26 30h12v9H26zM30 39v3M26 42h10M24 28v8" fill="#ddd" stroke="#555"/><path d="M49 33h4l5-5v14l-5-5h-4zM61 31q3 4 0 8M64 29q4 6 0 12" fill="#fff" stroke="#777"/></svg>
    <div class="clock">21:31<br>2015/12/9</div>
    <svg class="desk" viewBox="0 0 16 18"><path d="M0 1h16v11H0z" fill="#1a50a8"/><path d="M3 15h10v2H3z" fill="#456"/><path d="M0 1h9L4 12H0z" fill="#4a8ade"/></svg>
  </div>
</footer>

<section class="popup">
  <header><svg class="ico"><use href="#xwin"/></svg><span>Popview - 1</span><button aria-label="Close popview"><svg viewBox="0 0 12 12"><path d="M2 2l7 8M9 2l-7 8" stroke="#000" stroke-width="2"/></svg></button></header>
  <div class="pbody">
    <div class="pview"><svg viewBox="249 37 535 340" preserveAspectRatio="xMinYMin slice">
      <rect x="249" y="37" width="535" height="340"/>
      <path d="M249 38h52v75h-52zM451 38h145v75H451z" fill="#409700"/>
      <circle cx="317" cy="148" r="47" fill="#c09800"/>
      <path d="M359 170l19 22v99h-24v-89l-14-12z" fill="#0020ff"/>
      <path d="M317 111c22 0 37 18 37 36 0 13 2 17 5 23-4 9-10 16-17 20-8-4-15-4-25-5-20 0-37-17-37-37s17-37 37-37z" fill="#c0b8ff"/>
      <g fill="#f00"><rect x="249" y="290" width="68" height="86" rx="11"/><rect x="332" y="290" width="69" height="86" rx="11"/><rect x="415" y="290" width="69" height="86" rx="11"/><rect x="499" y="290" width="69" height="86" rx="11"/></g>
      <g fill="#ff20ff"><rect x="258" y="301" width="49" height="68" rx="8"/><rect x="341" y="301" width="50" height="68" rx="8"/><rect x="425" y="301" width="49" height="68" rx="8"/><rect x="509" y="301" width="49" height="68" rx="8"/><path d="M354 290h24v14h-24zM520 290h29v14h-29z"/></g>
      <circle cx="283" cy="265" r="34" fill="#c09800"/><circle cx="450" cy="265" r="34" fill="#c09800"/>
      <g fill="#c0b8ff"><path d="M283 241c14 0 24 11 24 24 0 12-11 17-11 25v9h-26v-9c0-8-11-13-11-25 0-13 10-24 24-24zM450 241c14 0 25 11 25 24 0 12-11 17-11 25v9h-27v-9c0-8-11-13-11-25 0-13 10-24 24-24z"/></g>
      <path d="M507 250h55q-11 22-13 40h-29q-2-20-13-40z" fill="#0020ff"/>
      <circle cx="534" cy="188" r="72" fill="#4166ff"/>
      <path d="M534 126c34 0 62 28 62 62 0 22-10 36-22 50-5 6-8 10-12 16-9 4-18 6-28 6s-19-2-27-5c-5-9-8-12-13-18-12-14-22-27-22-49 0-34 28-62 62-62z" fill="#404400"/>
    </svg></div>
    <div class="ptools">
      <button aria-label="Previous"><svg viewBox="0 0 90 90"><path d="M12 25h38v38H12z" fill="none" stroke="#000" stroke-width="6"/><path d="M60 12h22v22H60zM70 34v14H24M32 38l-9 9 9 9" fill="none" stroke="#000" stroke-width="4"/></svg></button>
      <button aria-label="Up"><svg><use href="#up"/></svg></button>
      <button aria-label="Down"><svg><use href="#down"/></svg></button>
      <button aria-label="Left"><svg><use href="#left"/></svg></button>
      <button aria-label="Right"><svg><use href="#right"/></svg></button>
      <button aria-label="In"><svg><use href="#zins"/></svg></button>
      <button aria-label="Out"><svg><use href="#zout"/></svg></button>
    </div>
  </div>
  <div class="pclose"><button>Close</button></div>
</section>
<div class="badge">83</div>
<div class="ime"><svg viewBox="0 0 146 22"><rect x="7" y="4" width="15" height="15" fill="#cfe4f8" stroke="#36a"/><path d="M17 14l3 3M11 8h7v7h-7z" fill="none" stroke="#36a" stroke-width="2"/><path d="M54 4q5 8-6 13 13 2 12-8-1-4-6-5z" fill="#4a78b0"/><circle cx="72" cy="10" r="2" fill="none" stroke="#4a78b0"/><path d="M77 11h3q0 4-3 5z" fill="#4a78b0"/><path d="M88 7h14v9H88zM90 10h10M90 13h10" fill="none" stroke="#4a78b0" stroke-width="2"/><circle cx="116" cy="7" r="3" fill="#4a78b0"/><path d="M111 18q0-8 5-8t5 8z" fill="#4a78b0"/><path d="M131 18l8-8q-1-5 4-6l-1 4 3 1q-1 4-5 3l-7 7z" fill="#4a78b0"/></svg><span>中</span></div>
</body>
</html>
```
FILE: styles.css
```css
* { box-sizing: border-box; }
body { margin: 0; height: 100vh; overflow: hidden; display: flex; flex-direction: column; position: relative; background: #d4d0c8; font-family: "Liberation Mono", "Noto Sans CJK SC", monospace; font-weight: bold; font-size: 12px; color: #000; }
button { font: inherit; color: inherit; padding: 0; margin: 0; border: 0; background: none; border-radius: 0; }
svg { display: block; flex: none; }
.defs { position: absolute; width: 0; height: 0; }
.app { flex: 1; min-height: 0; display: flex; flex-direction: column; padding: 4px 0 3px 5px; border-bottom: 1px solid #556; }
.ico { width: 16px; height: 14px; }

.titlebar { height: 20px; display: flex; align-items: center; gap: 4px; padding: 0 0 0 2px; background: linear-gradient(90deg, #808080, #c4c2c0); color: #d4d0c8; font: bold 11px "Noto Sans", "Noto Sans CJK SC", sans-serif; }
.title { flex: 1; }
.winbtns { display: flex; }
.winbtns button, .popup header button { width: 16px; height: 14px; background: #d4d0c8; border: 1px solid; border-color: #fff #404040 #404040 #fff; display: grid; place-items: center; }
.winbtns .x { margin-left: 2px; }
.winbtns svg, .popup header button svg { width: 11px; height: 11px; }

.top { height: 56px; display: flex; border-top: 2px solid #54807c; }
.menubar { flex: 1; display: flex; align-items: center; gap: 18px; padding: 0 12px 4px 13px; background: #9cdbdb; border: 2px solid; border-color: #d4f8f4 #54807c #54807c #d4f8f4; outline: 1px solid #d4f8f4; outline-offset: -1px; font: bold 14px "Liberation Serif", serif; }
.menubar u { text-underline-offset: 3px; }
.menubar .help { margin-left: auto; }
.brand { width: 410px; display: flex; background: #9cdbdb; border-left: 3px solid #54807c; border-bottom: 2px solid #d4f8f4; overflow: hidden; white-space: nowrap; }
.logo { width: 160px; height: 40px; margin: 7px 0 0 5px; overflow: visible; }
.logo text { font: italic bold 32px "Liberation Sans", sans-serif; fill: #00007c; }
.names { width: 140px; text-align: center; font-family: "Liberation Serif", serif; }
.gen { font-size: 24px; line-height: 30px; }
.ge { font-size: 14px; font-style: italic; line-height: 20px; }
.date { font-style: italic; font-weight: normal; font-size: 15px; line-height: 16px; text-align: right; padding-top: 3px; width: 102px; }

.main { flex: 1; min-height: 0; display: flex; background: #000; }
.side { width: 154px; background: #54cfb0; padding: 2px 2px 2px; display: flex; flex-direction: column; border-top: 1px solid #000; }
.jobbox { height: 20px; border: 1px solid #000; background: #9cdbdb; font-size: 15px; line-height: 18px; padding-left: 2px; white-space: nowrap; overflow: hidden; font-weight: normal; }
.jobbox.step { border-top: 0; }
.matrix { height: 27px; margin-top: 1px; border: 1px solid #000; padding: 2px; font-size: 15px; font-weight: normal; }
.matrix button { width: 100%; height: 100%; text-align: left; padding-left: 2px; background: #9cdbdb; border: 2px solid; border-color: #d4f8f4 #54807c #54807c #d4f8f4; line-height: 16px; }
.listwrap { flex: 1; min-height: 0; margin: 3px 0 3px; display: flex; border-top: 2px solid #2f6b5c; border-bottom: 4px solid #a8ecdc; border-left: 3px solid #2f6b5c; overflow: hidden; }
.list { width: 122px; border: solid #000; border-width: 0 1px 1px; padding: 0 2px 10px 1px; overflow: hidden; display: flex; flex-direction: column; gap: 4px; }
.grp { background: #000; padding: 1px 1px 0 1px; flex: none; }
.grp.first { margin-top: -7px; }
.grp label { height: 16px; display: grid; grid-template-columns: 14px 18px 1fr; align-items: start; }
.grp label span { height: 14px; line-height: 13px; background: #9cdbdb; padding: 0 2px 0 1px; display: flex; justify-content: space-between; align-items: center; }
.grp label span svg { width: 8px; height: 8px; }
.grp .w span { background: #fff; } .grp .g span { background: #00a67c; } .grp .o span { background: #ffc850; } .grp .y span { background: #dcae00; } .grp .s span { background: #9cb4bc; } .grp .r span { background: #dcdcdc; }
.grp input { appearance: none; margin: 0; width: 14px; height: 14px; background: #fff; border: 2px solid #fff; box-shadow: inset 0 0 0 2px #000; }
.grp input:checked { border-color: #0000d0; box-shadow: inset 0 0 0 2px #000048; }
.dot { width: 14px; height: 14px; border-radius: 50%; margin-left: 3px; }
.dot.red { background: #f01010; } .dot.blue { background: #0020ff; } .dot.green { background: #409700; }
.scroll { flex: 1; margin-left: 11px; border-left: 2px solid #2f6b5c; border-right: 2px solid #a8ecdc; background: #46b094; display: flex; flex-direction: column; align-items: center; box-shadow: -6px 0 0 -2px #a8ecdc; }
.scroll svg { width: 11px; height: 13px; }
.thumb { flex: 1; width: 100%; margin-top: 11px; background: #54cfb0; border: 1px solid; border-color: #a8ecdc #2f6b5c #2f6b5c #a8ecdc; }
.selected { height: 20px; border: 1px solid #000; background: #ffc850; line-height: 17px; padding-left: 3px; font-size: 12px; }

.canvas { flex: 1; min-width: 0; position: relative; overflow: hidden; background: #000; }
.pcb { width: 100%; height: 100%; }
.note { position: absolute; left: 48px; top: 392px; width: 316px; height: 227px; background: #fff; border: 3px solid #0000d8; color: #d4107c; text-align: center; font-size: 17px; line-height: 16px; font-weight: bold; padding-top: 6px; white-space: nowrap; }

.tools { width: 158px; overflow: hidden; border-left: 2px solid #2f6b5c; display: flex; flex-direction: column; }
.grid { display: grid; grid-template-columns: repeat(4, 38px); gap: 2px; padding: 2px 0 1px 0; border-top: 1px solid #2f6b5c; width: 161px; }
.grid button { width: 38px; height: 38px; background: #9cdbdb; border: 3px solid; border-color: #d4f8f4 #54807c #54807c #d4f8f4; display: grid; place-items: center; }
.grid svg, .ptools svg { width: 30px; height: 30px; border: 1px solid #000; }
.grid.gray { border-top: 2px solid #a8ecdc; padding-bottom: 2px; border-bottom: 3px solid #54807c; }
.grid.gray button { background: #d0d0d0; border-color: #f0f0f0 #787878 #787878 #f0f0f0; }
.grid .rb.rb { border-color: #c02020 #901818 #901818 #c02020; }
.grid.gray .wh { background: #fff; border-color: #fff #989898 #989898 #fff; }
.grid.gray .am { background: #ffc850; border-color: #ffe4a8 #987838 #987838 #ffe4a8; }
.gap { height: 22px; }
.overview { flex: 1; background: #f00; padding: 10px 4px 9px 7px; }
.frame { height: 100%; border: 2px solid #54cfd0; display: flex; align-items: flex-end; color: #a8ecdc; line-height: 8px; font-weight: normal; }
.frame span { margin-left: -5px; }
.gap2 { height: 21px; border-top: 2px solid #54cfb0; }
.coords { height: 45px; border-top: 2px solid #a8ecdc; border-bottom: 2px solid #a8ecdc; background: #54cfb0; font-size: 15px; font-weight: normal; line-height: 15px; padding: 6px 0 0 2px; white-space: nowrap; }

.cmd { height: 36px; background: #ffffd0; display: flex; align-items: stretch; border-top: 2px solid #000; border-bottom: 2px solid #000; }
.cb { width: 32px; border: 1px solid #000; display: grid; place-items: center; }
.cb svg { width: 18px; height: 18px; border: 1px solid #000; }
.cb:not(.on) svg { outline: 2px solid #d0cfa8; outline-offset: 2px; }
.cb.on { width: 30px; border: 3px solid #54bfa8; box-shadow: inset -2px -2px #a8a880; outline: 1px solid #2f6b5c; outline-offset: -1px; }
.cmd label { width: 49px; padding-left: 3px; line-height: 31px; border-right: 1px solid #000; }
.field { width: 172px; border: 3px solid; border-color: #a8a880 #d8d8b0 #d8d8b0 #a8a880; display: flex; align-items: flex-start; position: relative; margin-right: 2px; }
.field input { width: 100%; height: 100%; border: 0; padding: 0 10px; background: #ffffd0; outline: 0; }
.field svg { position: absolute; left: 4px; top: 1px; width: 7px; height: 16px; }
.msg { flex: 1; border: solid #000; border-width: 0 2px 0 1px; margin-left: 1px; padding-left: 3px; line-height: 31px; }
.unit { width: 74px; background: #54cfb0; border-left: 1px solid #2f6b5c; padding: 2px 0 2px 6px; font-size: 15px; font-weight: normal; }
.unit button { width: 100%; height: 100%; border: 2px solid; border-color: #a8ecdc #2f6b5c #2f6b5c #a8ecdc; display: flex; align-items: center; justify-content: space-between; padding: 0 5px 0 4px; }
.unit i { width: 11px; height: 7px; border: 1px solid; border-color: #a8ecdc #2f6b5c #2f6b5c #a8ecdc; }
.status { height: 27px; border: 1px solid #000; outline: 1px solid #d4f8f4; padding: 1px 0 2px 3px; background: #b0ffff; margin: 1px 0 0 1px; }
.status div { height: 100%; border-bottom: 2px solid #5c9c98; text-align: center; line-height: 23px; }

.taskbar { height: 51px; border-top: 3px solid #b8cce8; background: #d4d0c8; display: flex; padding: 3px 2px 0 2px; font: 12px Roboto, "Noto Sans CJK SC", sans-serif; }
.tb { height: 22px; display: flex; align-items: center; gap: 2px; padding: 0 2px; background: #d4d0c8; border: 1px solid; border-color: #fff #404040 #404040 #fff; box-shadow: inset -1px -1px #909090; white-space: nowrap; overflow: hidden; }
.tb svg { width: 16px; height: 16px; }
.tb.start { width: 47px; flex: none; }
.clover { width: 18px; height: 18px; margin: 15px 0 0 13px; }
.sep { width: 2px; border-left: 1px solid #808080; border-right: 1px solid #fff; margin: 2px 10px 0 20px; }
.sep.late { margin: 2px 6px 0 8px; }
.rows { width: 1278px; flex: 0 1 auto; min-width: 0; display: flex; flex-direction: column; gap: 2px; }
.row { display: flex; gap: 2px; }
.row .tb { width: 146px; flex: 0 1 auto; }
.row.two .tb { width: 159px; }
.quick { display: flex; width: 101px; gap: 17px; padding: 3px 0 0 8px; }
.quick svg { width: 17px; height: 17px; }
.row .active { background: #fff; border-color: #404040 #fff #fff #404040; box-shadow: none; font-weight: bold; }
.row .flash { background: #0a246a; color: #fff; }
.lang { width: 20px; height: 42px; margin-right: 4px; }
.tray { flex: 1 0 170px; display: flex; border: 1px solid; border-color: #808080 #fff #fff #808080; }
.icons { width: 94px; height: 46px; }
.clock { width: 58px; text-align: center; line-height: 19px; padding-top: 6px; }
.desk { width: 16px; height: 18px; margin-top: 14px; }

.popup { position: absolute; left: 242px; top: 11px; width: 585px; height: 402px; background: #d4d0c8; border: 1px solid; border-color: #f4f2ec #606060 #606060 #f4f2ec; padding: 2px 3px 3px; display: flex; flex-direction: column; }
.popup header { height: 19px; display: flex; align-items: center; gap: 4px; padding: 0 3px 0 1px; background: linear-gradient(90deg, #0a246a, #a6caf0); color: #fff; font: bold 12px "Noto Sans", sans-serif; }
.popup header span { flex: 1; }
.pbody { flex: 1; min-height: 0; display: flex; margin-top: 1px; }
.pview { flex: 1; border: 3px solid; border-color: #2f6b5c #a8ecdc #a8ecdc #2f6b5c; background: #000; overflow: hidden; }
.pview svg { width: 100%; height: 100%; }
.ptools { width: 36px; background: #54cfb0; border: 1px solid #000; }
.ptools button { width: 34px; height: 35px; border-bottom: 2px solid #000; display: grid; place-items: center; background: #54bfa8; }
.ptools svg { width: 29px; height: 29px; background: #9cdbdb; border: 3px solid; border-color: #d4f8f4 #54807c #54807c #d4f8f4; padding: 1px; outline: 1px solid #000; outline-offset: -5px; }
.pclose { height: 28px; background: #54cfb0; border: 1px solid #000; padding: 2px; font-size: 15px; font-weight: normal; }
.pclose button { width: 100%; height: 100%; background: #9cdbdb; border: 2px solid; border-color: #d4f8f4 #54807c #54807c #d4f8f4; line-height: 18px; }

.badge { position: absolute; top: -27px; right: 168px; width: 46px; height: 46px; border-radius: 50%; background: #ff8830; border: 2px solid #e8e0d8; color: #fff; font: bold 12px/16px "Noto Sans", sans-serif; text-align: center; padding-top: 24px; box-shadow: 0 2px 4px #0006; }
.ime { position: absolute; right: 1px; bottom: 54px; width: 151px; height: 25px; background: #f4faff; border: 2px solid #8fb4dc; border-radius: 3px; }
.ime svg { width: 146px; height: 22px; }
.ime span { position: absolute; left: 28px; top: 1px; color: #36a; font: 13px/20px "Noto Sans CJK SC", sans-serif; }
```
